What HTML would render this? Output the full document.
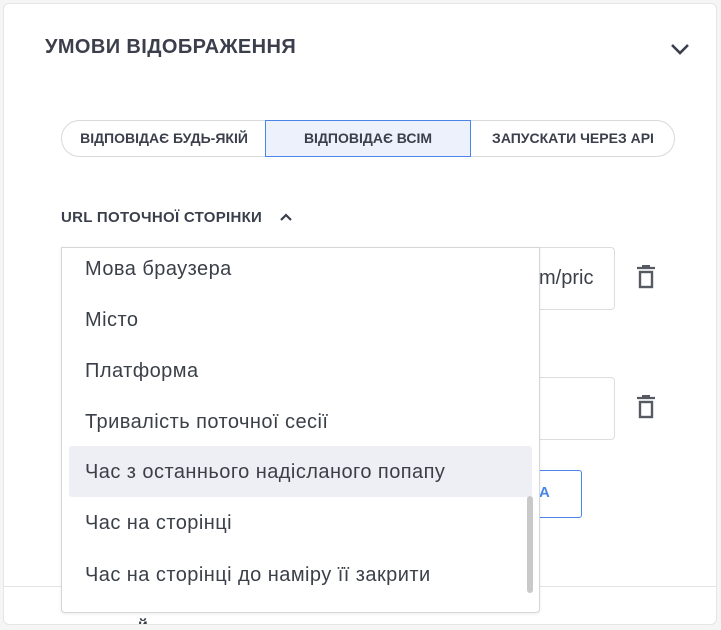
<!DOCTYPE html>
<html><head><meta charset="utf-8">
<style>
*{box-sizing:border-box;margin:0;padding:0}
body{width:721px;height:630px;background:#f5f5f6;font-family:"Liberation Sans","Noto Sans CJK SC",sans-serif;position:relative;overflow:hidden;color:#3b3f48}
.card{position:absolute;left:3px;top:3px;width:714px;height:622px;background:#fff;border:1px solid #e6e6e8;border-radius:6px;overflow:hidden}
.abs{position:absolute}
.title{left:45px;top:36px;font-size:20px;font-weight:600;color:#3a3f4b;letter-spacing:0.4px}
.tog{left:61px;top:120px;width:614px;height:37px;border:1px solid #d8d9dc;border-radius:19px}
.tog div{position:absolute;top:0;height:35px;line-height:35px;font-size:14px;font-weight:600;text-align:center;color:#3a3f4b}
.sel{border:1px solid #4a86e8;background:#edf1fb}
.lab{left:61px;top:209px;font-size:15px;font-weight:600;color:#3a3f4b;letter-spacing:0.3px}
.inp{border:1px solid #dcdde0;border-radius:4px;background:#fff}
.dd{left:61px;top:247px;width:479px;height:366px;border:1px solid #d5d6d9;border-radius:0 0 4px 4px;background:#fff;box-shadow:0 1px 3px rgba(0,0,0,.08)}
.it{position:absolute;left:23px;font-size:20px;letter-spacing:0.45px;color:#3b3f48}
</style></head><body>
<div class="card"></div>
<div class="abs title">УМОВИ ВІДОБРАЖЕННЯ</div>
<svg class="abs" style="left:670px;top:42px" width="20" height="14" viewBox="0 0 20 14"><path d="M2 3l8 8 8-8" fill="none" stroke="#3a3f4b" stroke-width="2.6"/></svg>
<div class="abs tog">
 <div style="left:0;width:204px">ВІДПОВІДАЄ БУДЬ-ЯКІЙ</div>
 <div class="sel" style="left:203px;width:206px;top:-1px;height:37px;line-height:35px">ВІДПОВІДАЄ ВСІМ</div>
 <div style="left:409px;width:204px">ЗАПУСКАТИ ЧЕРЕЗ API</div>
</div>
<div class="abs lab">URL ПОТОЧНОЇ СТОРІНКИ</div>
<svg class="abs" style="left:279px;top:212px" width="14" height="10" viewBox="0 0 14 10"><path d="M2 8l5-5 5 5" fill="none" stroke="#3a3f4b" stroke-width="2.2"/></svg>
<div class="abs inp" style="left:500px;top:247px;width:115px;height:63px"><span style="position:absolute;left:38px;top:19px;font-size:20px">m/pric</span></div>
<div class="abs inp" style="left:500px;top:377px;width:115px;height:63px"></div>
<svg class="abs" style="left:635px;top:265px" width="22" height="24" viewBox="0 0 22 24"><path d="M2 3h18M7 1h8" stroke="#555a63" stroke-width="2.2"/><rect x="5" y="7" width="12" height="15" fill="none" stroke="#555a63" stroke-width="2.4"/></svg>
<svg class="abs" style="left:635px;top:395px" width="22" height="24" viewBox="0 0 22 24"><path d="M2 3h18M7 1h8" stroke="#555a63" stroke-width="2.2"/><rect x="5" y="7" width="12" height="15" fill="none" stroke="#555a63" stroke-width="2.4"/></svg>
<div class="abs" style="left:480px;top:470px;width:102px;height:48px;border:1px solid #4a86e8;border-radius:3px"><span style="position:absolute;left:58px;top:13px;font-size:15px;font-weight:700;color:#4a86e8">A</span></div>
<div class="abs" style="left:4px;top:586px;width:712px;height:1px;background:#e3e4e6"></div>
<div class="abs" style="left:100px;top:600px;width:100px;height:24px;overflow:hidden"><span style="position:absolute;left:38px;top:17px;font-size:16px;font-weight:700;color:#3a3f4b">й</span></div>
<div class="abs dd">
 <div class="abs" style="left:7px;top:198px;width:463px;height:51px;background:#eeeff4;border-radius:3px"></div>
 <div class="it" style="top:10px">Мова браузера</div>
 <div class="it" style="top:61px">Місто</div>
 <div class="it" style="top:112px">Платформа</div>
 <div class="it" style="top:163px">Тривалість поточної сесії</div>
 <div class="it" style="top:213px">Час з останнього надісланого попапу</div>
 <div class="it" style="top:264px">Час на сторінці</div>
 <div class="it" style="top:316px">Час на сторінці до наміру її закрити</div>
 <div class="abs" style="left:465px;top:248px;width:6px;height:97px;background:#c9c9c9;border-radius:3px"></div>
</div>
</body></html>
